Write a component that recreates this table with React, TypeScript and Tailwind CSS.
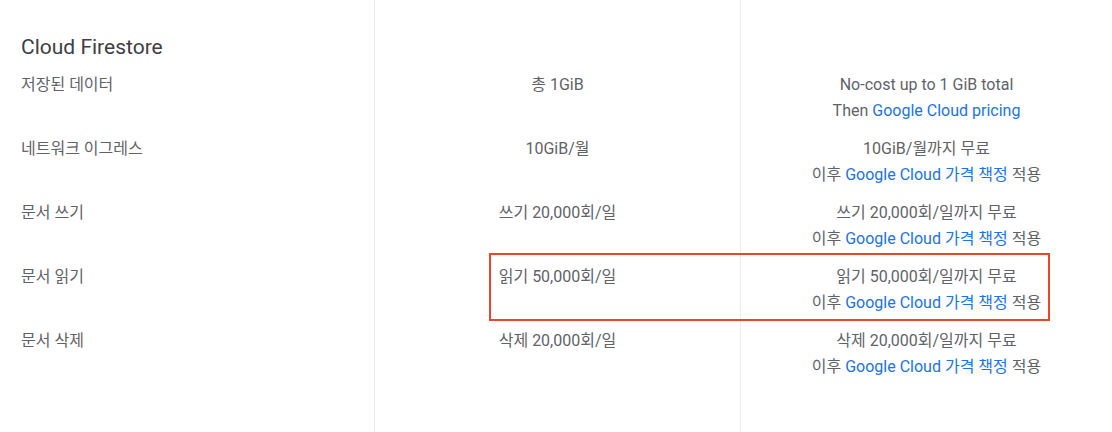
import React from 'react';

type Row = {
  label: string;
  limit: string;
  free: string;
  then: 'en' | 'ko';
};

const rows: Row[] = [
  { label: '저장된 데이터', limit: '총 1GiB', free: 'No-cost up to 1 GiB total', then: 'en' },
  { label: '네트워크 이그레스', limit: '10GiB/월', free: '10GiB/월까지 무료', then: 'ko' },
  { label: '문서 쓰기', limit: '쓰기 20,000회/일', free: '쓰기 20,000회/일까지 무료', then: 'ko' },
  { label: '문서 읽기', limit: '읽기 50,000회/일', free: '읽기 50,000회/일까지 무료', then: 'ko' },
  { label: '문서 삭제', limit: '삭제 20,000회/일', free: '삭제 20,000회/일까지 무료', then: 'ko' },
];

const link = 'text-[#1a73e8]';

export default function App() {
  return (
    <div
      className="relative w-[1112px] h-[432px] bg-white text-[16px] leading-[26px] text-[#5f6368] overflow-hidden"
      style={{ fontFamily: 'Roboto, "Noto Sans CJK KR", sans-serif' }}
    >
      <div className="grid grid-cols-[375px_366px_1fr] h-full">
        <div className="border-r border-[#e8eaed] pl-[21px]">
          <div className="h-[72px] pt-[33px]">
            <h2 className="text-[21px] leading-[28px] text-[#3c4043]">Cloud Firestore</h2>
          </div>
          {rows.map((r) => (
            <div key={r.label} className="h-16">
              {r.label}
            </div>
          ))}
        </div>

        <div className="border-r border-[#e8eaed] text-center">
          <div className="h-[72px]" />
          {rows.map((r) => (
            <div key={r.label} className="h-16">
              {r.limit}
            </div>
          ))}
        </div>

        <div className="text-center">
          <div className="h-[72px]" />
          {rows.map((r) => (
            <div key={r.label} className="h-16">
              <div>{r.free}</div>
              {r.then === 'en' ? (
                <div>
                  Then <a className={link}>Google Cloud pricing</a>
                </div>
              ) : (
                <div>
                  이후 <a className={link}>Google Cloud 가격 책정</a> 적용
                </div>
              )}
            </div>
          ))}
        </div>
      </div>

      {/* highlight annotation */}
      <div className="absolute left-[489px] top-[253px] w-[561px] h-[68px] border-2 border-[#e8472a] pointer-events-none" />
    </div>
  );
}
